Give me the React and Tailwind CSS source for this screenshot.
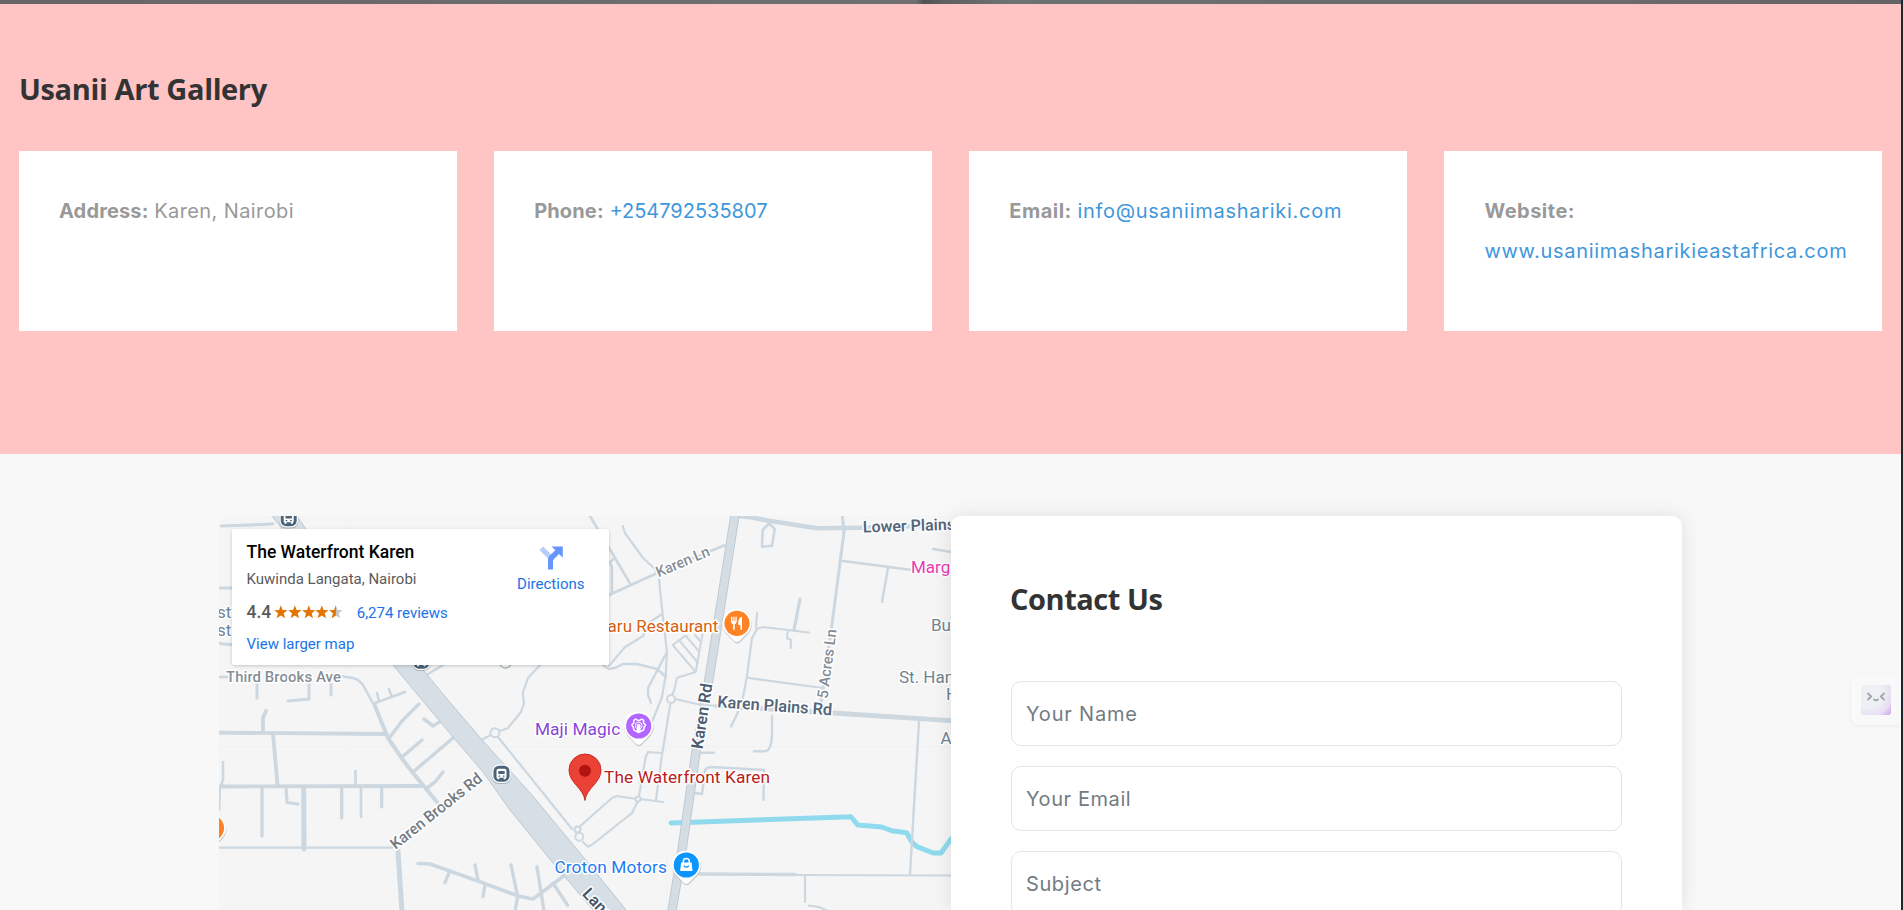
const road = "#ccd7e0";
const roads = [
  [3, "M221 526 L273 524 M219 588 L236 588 M219 643 L223 644 L236 645"],
  [2.5, "M219 677 L228 677 M340 676 L353 678 L358 680 L363 685 L375 707"],
  [4, "M375 706 L388 738 L403 760 L413 773 L437 802"],
  [2.5, "M375 703 L405 692 M377 693 L379 701 M389 689 L392 697"],
  [3.5, "M390 737 L402 721 L419 704 M424 719 L433 726 L441 721 M402 757 L422 740 M413 772 L453 738 M427 788 L435 782 L443 772"],
  [3, "M257 683 L257 698 M309 683 L309 699 L288 701 M331 683 L331 695"],
  [3.8, "M219 732.7 L385 734 M263 732 L263 718 L266 711 M273 733 L277.5 785 M219 786.5 L421 786"],
  [2.6, "M223 762 L223 780 L220 788 L219 810 M355.5 771 V786 M361 788 V817"],
  [3.2, "M262 788 V836 M286 788 L287 802.5 L298 804 M341.7 788 V818 M381.7 788 V807"],
  [5, "M303.7 787 L304 849 M398 851 L402 912"],
  [2.2, "M219 847.7 H392"],
  [3.6, "M418 863.5 L430 864 L480 881.7 L518 896 L533 899 L565 875"],
  [3.4, "M449 873 L445 882.5 M475 865 L478 880 M485 885 L483 896.5 M511 865 L517.7 896.5 L515 911 M537 867 L544 911 M553 883 L567.7 905.5"],
  [2.6, "M428 674 L445 664"],
  [2.2, "M483 739 L491 735 M500 731 L508 728 L521 712 L524 703 L522.7 693 L528 678 L541 664 M498 737 L572 829"],
  [2.6, "M590 516 L631 585 M612 552 L615 558 L610 562 L612 567 L612 593"],
  [2.8, "M724 545.5 L655 574 L609 595"],
  [2.2, "M622.7 526 L625 533 L643 558 L654 568 L659 576 L660 590 L663 618 L667 652 L665.7 675 L662 697 L652 722 M662 614 L650 622 L643 636 L635 641 L625 647 L609 666"],
  [2.4, "M603 665 L609 669 L615 668 L623 664 L637 664 L657 669 L666 677 M667 652 L648 688 L648 695 L651 703"],
  [2, "M685 636 L672.7 645 L695.7 672 L700 648 L702.5 634 M679 640 L698 663 M686 636 L699.5 652 M695 635 L701 642 M695.7 672 L677 677.7 L674 691 L672 695"],
  [2.2, "M675 699 L697 704 L717 706 M670.5 703 L662 755 L656 800 M661.7 753 L648 752 L645.7 757 L639 796 M663 802 L640 799 M636 799 L617 796 L612 798 L578 828 M638 801 L632 813 L593 844 L588 846.7 L583 842"],
  [4.6, "M739 516 L752 517.5 L767 520.5 L817 528.3 L860 527.7 L950 525"],
  [3, "M842.3 515 L844 532 L831.5 628 L821 704"],
  [2.4, "M843 561 L912 570 M888 568 L882 602 M933 549 L951 552"],
  [2.6, "M762 546.7 L762.7 530 L769 523.5 L774.7 529 L772 545.7 Z"],
  [3.2, "M800 599 L794 630"],
  [2.2, "M809 632.5 L763 627 L757 629 L752 638 L746.7 677.7 L742 702 M757 613 L756 628 M787.7 631 L787 638 L791 640 L790.7 648 M746.7 677.7 L823 688"],
  [4.8, "M717 706 L833 713 L951 720.7"],
  [2.4, "M919 721 L910 874 M772 716 L772 736 Q771 751 765 751.3 H754 M738 712 L731 726.5 M821 698 V708 M701 752.7 H714"],
  [2.4, "M695 793 L702 794 L705 770 Q707 767 712 767 L764 770 L763.5 800"],
  [3.4, "M700 874 L795 874.5"],
  [2.2, "M795 875 L951 875.5 M805 875 V902 M809 905.7 L819 907 L828 911"],
];

const highway = "M271 515 L393 665 L422 700 L453 737 L483 772 L510 810 L553 863 L594 911 L627 911 L580 853 L560 829 L532 795 L483 741 L448 700 L306 529 L296 515 Z";
const karenRoad = "M735 515 L726 572 L708 685 L696 752 L682 850 L672 911";
const river = "M671 823 L851 816.7 L857.7 825 L881.7 827 L891.7 830.7 L906.7 832.7 L911.7 841.7 L917 846.7 L933 853 L941 853 L951 839";
const teardrop = "M0 -14.5 A14.5 14.5 0 0 1 11.5 8.8 L3 17.5 Q0 20.3 -3 17.5 L-11.5 8.8 A14.5 14.5 0 0 1 0 -14.5 Z";

function Marker({ x, y, color, children }) {
  return (
    <g transform={`translate(${x} ${y})`}>
      <path d={teardrop} fill="#5f6b78" opacity="0.35" transform="translate(0.3 1.2)" />
      <path d={teardrop} fill="#fff" />
      <circle r="12.6" fill={color} />
      {children}
    </g>
  );
}

function Bus({ x, y }) {
  return (
    <g transform={`translate(${x} ${y})`}>
      <rect x="-9.5" y="-9" width="19" height="19" rx="7" fill="#5f6b78" opacity="0.4" />
      <rect x="-9.3" y="-9.5" width="18.6" height="18.6" rx="7" fill="#fff" />
      <rect x="-8" y="-8.3" width="16" height="16" rx="5.5" fill="#4a6378" />
      <path fillRule="evenodd" fill="#fff" d="M-3 -5.2 H3 Q5 -5.2 5 -3.2 V3.8 H4.2 V5.2 H2.2 V3.8 H-2.2 V5.2 H-4.2 V3.8 H-5 V-3.2 Q-5 -5.2 -3 -5.2 Z M-3.2 -3 V0 H3.2 V-3 Z M-3 1.4 V2.8 H-1.4 V1.4 Z M1.4 1.4 V2.8 H3 V1.4 Z" />
    </g>
  );
}

function Label({ x, y, r = 0, w, size = 17, weight = 400, fill, anchor = "start", children }) {
  return (
    <text
      transform={`translate(${x} ${y}) rotate(${r})`}
      fontSize={size}
      fontWeight={weight}
      fill={fill}
      textAnchor={anchor}
      textLength={w}
      stroke="#fff"
      strokeWidth="3"
      strokeLinejoin="round"
      paintOrder="stroke"
      fontFamily="Roboto, sans-serif"
    >
      {children}
    </text>
  );
}

function MapDrawing() {
  return (
    <svg viewBox="219 516 732 394" className="block h-[394px] w-[732px]">
      <rect x="219" y="516" width="732" height="394" fill="#f5f5f5" />
      <path d="M346.5 516 V910 M666.5 516 V910 M219 746.5 H951" stroke="#f1f1f1" />
      <path d={river} fill="none" stroke="#90daee" strokeWidth="5" strokeLinecap="round" strokeLinejoin="round" />
      {roads.map(([w, d]) => (
        <path key={d} d={d} fill="none" stroke={road} strokeWidth={w} strokeLinecap="round" strokeLinejoin="round" />
      ))}
      <g fill="#f5f5f5" stroke={road} strokeWidth="2">
        <circle cx="495" cy="732.7" r="4.5" />
        <circle cx="671" cy="699" r="4" />
        <circle cx="638" cy="799" r="2.6" />
        <circle cx="577.5" cy="829.5" r="3" />
        <circle cx="579.3" cy="836.7" r="4" />
      </g>
      <path d={highway} fill="#d7dfe6" stroke="#bcc8d2" strokeWidth="1" />
      <path d={karenRoad} fill="none" stroke="#bcc8d2" strokeWidth="9.4" />
      <path d={karenRoad} fill="none" stroke="#d5dde4" strokeWidth="7.6" />

      <circle cx="505.5" cy="662" r="6" fill="#fff" stroke="#aab3bb" strokeWidth="1.3" />
      <Bus x={288.7} y={518.5} />
      <Bus x={421.3} y={661} />
      <Bus x={501.5} y={774} />

      <Label x={217} y={618} size={17} fill="#6f8492">sti</Label>
      <Label x={217} y={636} size={17} fill="#6f8492">stri</Label>
      <Label x={226} y={681.5} w={115} size={15} weight={500} fill="#868d95">Third Brooks Ave</Label>
      <Label x={395.6} y={850} r={-38.5} w={112} size={15.5} weight={500} fill="#737a82">Karen Brooks Rd</Label>
      <Label x={658.5} y={577.5} r={-23} w={57} size={15} weight={500} fill="#868d95">Karen Ln</Label>
      <Label x={827.5} y={699} r={-82.5} w={70} size={15} weight={500} fill="#868d95">5 Acres Ln</Label>
      <Label x={702.5} y={749.5} r={-81.3} w={66} size={16.5} weight={600} fill="#4c5c6f">Karen Rd</Label>
      <Label x={717} y={707.3} r={4} w={115} size={16.5} weight={600} fill="#56677a">Karen Plains Rd</Label>
      <Label x={863} y={532.6} r={-1.8} size={16} weight={600} fill="#56677a">Lower Plains Rd</Label>
      <Label x={581.6} y={894.6} r={47} size={16.5} weight={600} fill="#46566a">Langata Rd</Label>
      <Label x={718.3} y={631.8} size={17} fill="#d5600f" anchor="end">Tamarind Haru Restaurant</Label>
      <Label x={911} y={573.3} size={17} fill="#e83cb4">Margaux</Label>
      <Label x={931} y={630.5} size={17} fill="#6f8492">Bul</Label>
      <Label x={899} y={682.5} size={17} fill="#6f8492">St. Hannah</Label>
      <Label x={946} y={700} size={17} fill="#6f8492">H</Label>
      <Label x={940.5} y={743.5} size={17} fill="#6f8492">A</Label>
      <Label x={534.9} y={734.5} w={85.3} size={17.3} fill="#8a45d6">Maji Magic</Label>
      <Label x={604} y={783} w={166} size={17.3} fill="#b9201c">The Waterfront Karen</Label>
      <Label x={554.4} y={873} w={112.5} size={17.3} fill="#1f7cf0">Croton Motors</Label>

      <Marker x={211.5} y={828} color="#ff8324" />
      <Marker x={737} y={623.3} color="#ff8324">
        <path d="M-6 -6.5 V-2 Q-6 0.8 -3.9 1.2 V6.5 H-2.3 V1.2 Q-0.3 0.8 -0.3 -2 V-6.5 H-1.6 V-2.2 H-2.5 V-6.5 H-3.7 V-2.2 H-4.6 V-6.5 Z M5 -6.5 Q1.2 -5.5 1.3 -1 V1.8 H3.4 V6.5 H5 Z" fill="#fff" />
      </Marker>
      <Marker x={638.7} y={726} color="#b266ff">
        <path
          d="M-3 -7 L-1 -5.6 H1 L3 -7 L5 -5.6 L4.8 -3.2 L6.8 -1 L5.2 1.6 L5 3.8 L2.6 5.2 L0 6.6 L-2.6 5.2 L-5 3.8 L-5.2 1.6 L-6.8 -1 L-4.8 -3.2 L-5 -5.6 Z"
          fill="none" stroke="#fff" strokeWidth="1.5" strokeLinejoin="round"
        />
        <circle r="3.4" cy="-0.4" fill="none" stroke="#fff" strokeWidth="1" />
        <path d="M0 -2.3 A2.3 2.3 0 0 1 1.5 1.4 L2.3 6 H-2.3 L-1.5 1.4 A2.3 2.3 0 0 1 0 -2.3 Z" fill="#fff" />
      </Marker>
      <Marker x={686.3} y={865} color="#0b95ff">
        <path d="M-3 -2 V-3.6 A3 3 0 0 1 3 -3.6 V-2" fill="none" stroke="#fff" strokeWidth="1.5" />
        <path d="M-5.2 -2.6 H5.2 L6.2 6 H-6.2 Z" fill="#fff" />
        <path d="M-2.6 0.8 Q0 3.6 2.6 0.8" fill="none" stroke="#0b95ff" strokeWidth="1.3" />
      </Marker>
      <path
        d="M585 800.5 C583.5 788 569 783 569 770 A16 16 0 0 1 601 770 C601 783 586.5 788 585 800.5 Z"
        fill="#ea4335" stroke="#c5221f" strokeWidth="0.9"
      />
      <circle cx="585" cy="770.7" r="6" fill="#b31412" />
    </svg>
  );
}

function Star({ half }) {
  const d = "M7 0.2 L8.8 5 L13.8 5.2 L9.9 8.4 L11.3 13.5 L7 10.6 L2.7 13.5 L4.1 8.4 L0.2 5.2 L5.2 5 Z";
  return (
    <svg viewBox="0 0 14 14" className="h-[14px] w-[13.7px]">
      <path d={d} fill={half ? "#c6c6c6" : "#e37400"} />
      {half && <path d="M7 0.2 V10.6 L2.7 13.5 L4.1 8.4 L0.2 5.2 L5.2 5 Z" fill="#e37400" />}
    </svg>
  );
}

function PlaceCard() {
  return (
    <div className="absolute left-[13px] top-[13px] flex h-[136px] w-[377px] justify-between rounded-[2px] bg-white pl-[14.5px] pr-[24.5px] font-[Roboto,sans-serif] text-[15px] shadow-[0_1px_4px_-1px_rgba(0,0,0,0.3)]">
      <div className="pt-[12px]">
        <div className="text-[17.5px] font-medium leading-[22px] text-black">The Waterfront Karen</div>
        <div className="mt-[6px] leading-[20px] text-[#5b5b5b]">Kuwinda Langata, Nairobi</div>
        <div className="mt-[12px] flex h-[22px] items-center">
          <span className="text-[17.5px] font-medium leading-[22px] text-[#5b5b5b]">4.4</span>
          <span className="ml-[3px] flex">
            <Star /><Star /><Star /><Star /><Star half />
          </span>
          <span className="ml-[14px] pt-[2px] text-[#1a73e8]">6,274 reviews</span>
        </div>
        <div className="mt-[11px] leading-[20px] text-[#1a73e8]">View larger map</div>
      </div>
      <div className="flex flex-col items-center pt-[17px]">
        <svg viewBox="0 0 24 24" className="h-[24px] w-[24px]">
          <path d="M0.5 4 L4.2 0.5 L12.5 8.8 L9.5 13 Z" fill="#b6cdfb" />
          <path d="M9 23.5 V13.5 Q9 11.5 10.4 10 L16.3 4.2 L12.6 0.5 H23.8 V11.8 L20 8 L14.6 13.4 Q14 14 14 15 V23.5 Z" fill="#6696fb" />
        </svg>
        <div className="mt-[4px] leading-[20px] text-[#1a73e8]">Directions</div>
      </div>
    </div>
  );
}

function InfoCard({ label, labelClass, value, valueClass, href }) {
  return (
    <div className="h-[180px] bg-white pl-[40px] pr-[30px] pt-[40px] text-[20px] leading-[40px] text-[#999]">
      <p>
        <span className={`font-bold ${labelClass}`}>{label}</span>{" "}
        {href ? (
          <a href={href} className={`text-[#3f97db] ${valueClass}`}>{value}</a>
        ) : (
          <span className={valueClass}>{value}</span>
        )}
      </p>
    </div>
  );
}

const heading = "font-['Open_Sans','Noto_Sans',sans-serif] font-bold text-[#333] text-[29px]";

function Field({ placeholder, className }) {
  return (
    <input
      placeholder={placeholder}
      className={`block h-[65px] w-full rounded-[10px] border border-[#e5e5e5] bg-white px-[14px] text-[20px] placeholder:text-[#727b83] ${className}`}
    />
  );
}

export default function App() {
  return (
    <div className="flex h-[910px] w-[1903px] overflow-hidden bg-[#24272a] font-[Inter,sans-serif]">
      <main className="relative h-[910px] w-[1901px] bg-[#f8f8f8]">
        <div className="h-[4px] bg-[linear-gradient(90deg,#666_0,#6e6f70_45%,#6f6f70_48.2%,#4f5152_48.6%,#5d5e60_49.5%,#6f7274_53%,#6a6b6d_70%,#6b6b6d_85%,#646466_100%)]" />
        <section className="h-[450px] bg-[#ffc4c4] px-[19px] pt-[65px]">
          <h2 className={`${heading} leading-[40px] tracking-[-0.37px]`}>Usanii Art Gallery</h2>
          <div className="mt-[42px] grid grid-cols-4 gap-x-[37.5px]">
            <InfoCard label="Address:" labelClass="tracking-[0.15px]" value="Karen, Nairobi" valueClass="tracking-[0.4px]" />
            <InfoCard label="Phone:" labelClass="tracking-[0.15px]" value="+254792535807" valueClass="tracking-[0px]" href="#phone" />
            <InfoCard label="Email:" labelClass="tracking-[0.5px]" value="info@usaniimashariki.com" valueClass="tracking-[0.72px]" href="#email" />
            <InfoCard label="Website:" labelClass="tracking-[0.5px]" value="www.usaniimasharikieastafrica.com" valueClass="tracking-[0.68px]" href="#website" />
          </div>
        </section>
        <section className="flex justify-center pt-[62px]">
          <div className="relative h-[394px] w-[732px] overflow-hidden rounded-t-[10px]">
            <MapDrawing />
            <PlaceCard />
          </div>
          <div className="relative h-[394px] w-[731px] rounded-t-[10px] bg-white px-[60px] pt-[61px] shadow-[0_0_20px_rgba(0,0,0,0.1)]">
            <h2 className={`${heading} ml-[-1px] leading-[44px] tracking-[-0.45px]`}>Contact Us</h2>
            <form className="mt-[60px] flex flex-col gap-[20px]">
              <Field placeholder="Your Name" className="tracking-[0.8px]" />
              <Field placeholder="Your Email" className="tracking-[0.58px]" />
              <Field placeholder="Subject" className="tracking-[0.6px]" />
            </form>
          </div>
        </section>
        <div className="absolute right-0 top-[675px] flex h-[50px] w-[50px] items-center justify-center rounded-l-[8px] bg-[#f9f9f9] shadow-[0_1px_4px_rgba(0,0,0,0.05)]">
          <div className="h-[30px] w-[30px] rounded-[3px] bg-[radial-gradient(circle_at_25%_30%,#edf1f5_0,#edf1f5_45%,#e8dcf2_75%,#c9a0e6_100%)]">
            <svg viewBox="0 0 30 30" className="h-[30px] w-[30px]" fill="none" stroke="#a3a5aa" strokeWidth="1.8" strokeLinecap="round" strokeLinejoin="round">
              <path d="M7 8.5 L10.2 11.5 L7 14.5 M23 8.5 L19.8 11.5 L23 14.5 M13 14.5 Q15 16 17 14.5" />
            </svg>
          </div>
        </div>
      </main>
    </div>
  );
}
